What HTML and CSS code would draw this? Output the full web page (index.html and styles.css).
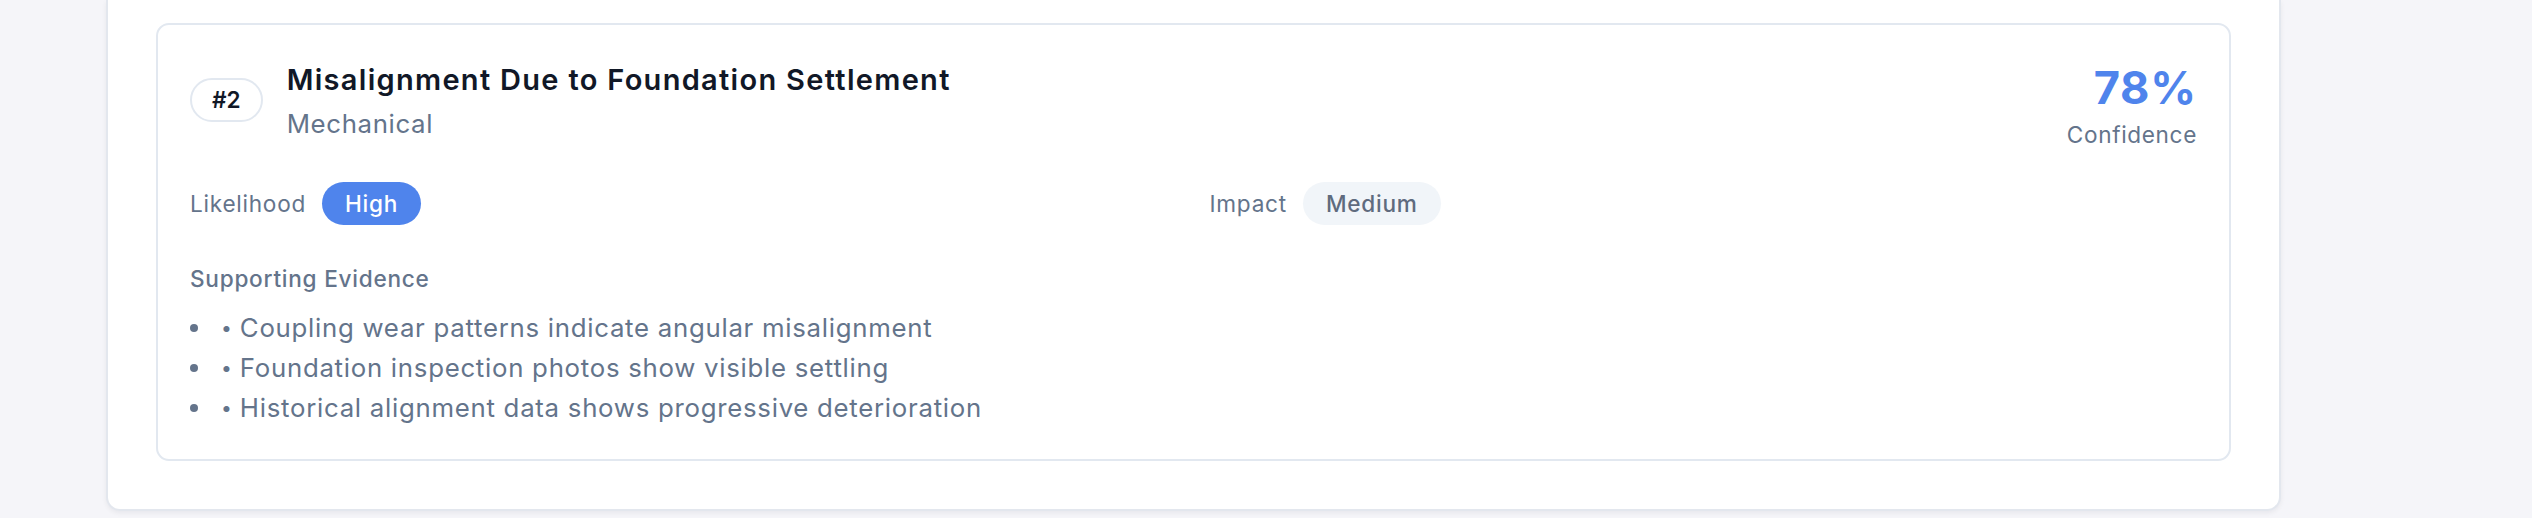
FILE: index.html
```html
<!DOCTYPE html>
<html lang="en">
<head>
<meta charset="utf-8">
<title>Root Cause Analysis</title>
<link rel="stylesheet" href="styles.css">
</head>
<body>
<section class="panel">
  <article class="cause">
    <header class="cause-head">
      <div class="cause-id">
        <span class="rank">#2</span>
        <div class="cause-text">
          <h3 class="cause-title">Misalignment Due to Foundation Settlement</h3>
          <div class="cause-category">Mechanical</div>
        </div>
      </div>
      <div class="confidence">
        <div class="confidence-value">78%</div>
        <div class="confidence-label">Confidence</div>
      </div>
    </header>

    <div class="ratings">
      <div class="rating">
        <span class="rating-label">Likelihood</span>
        <span class="pill pill-high">High</span>
      </div>
      <div class="rating">
        <span class="rating-label">Impact</span>
        <span class="pill pill-medium">Medium</span>
      </div>
    </div>

    <div class="evidence">
      <h4 class="evidence-title">Supporting Evidence</h4>
      <ul class="evidence-list">
        <li><span class="tick">•</span> Coupling wear patterns indicate angular misalignment</li>
        <li><span class="tick">•</span> Foundation inspection photos show visible settling</li>
        <li><span class="tick">•</span> Historical alignment data shows progressive deterioration</li>
      </ul>
    </div>
  </article>
</section>
</body>
</html>
```

FILE: styles.css
```css
* {
  box-sizing: border-box;
}

html, body {
  margin: 0;
  padding: 0;
}

body {
  background: #f5f5f9;
  font-family: Inter, "Noto Sans", "Liberation Sans", sans-serif;
  color: #111827;
  min-height: 518px;
}

.panel {
  margin-left: 106px;
  width: 2175px;
  background: #ffffff;
  border: 2px solid #e3e7ee;
  border-top: 0;
  border-radius: 0 0 14px 14px;
  padding: 23px 48px 48px;
  box-shadow: 0 2px 5px rgba(15, 23, 42, 0.06);
}

.cause {
  border: 2px solid #e2e8f0;
  border-radius: 13px;
  padding: 32px;
  background: #ffffff;
}

.cause-head {
  display: flex;
  justify-content: space-between;
  align-items: flex-start;
}

.cause-id {
  display: flex;
  align-items: center;
  gap: 24px;
}

.rank {
  display: inline-block;
  border: 2px solid #e2e8f0;
  border-radius: 999px;
  padding: 4px 20px;
  font-size: 22.6px;
  line-height: 32px;
  font-weight: 600;
  color: #111827;
}

.cause-title {
  margin: 0;
  font-size: 29px;
  line-height: 45px;
  font-weight: 600;
  letter-spacing: 1.3px;
  color: #111827;
}

.cause-category {
  margin-top: 2px;
  font-size: 25.8px;
  line-height: 39px;
  letter-spacing: 0.65px;
  color: #64748b;
}

.confidence {
  text-align: right;
}

.confidence-value {
  font-size: 45.2px;
  line-height: 62px;
  font-weight: 700;
  letter-spacing: 0.8px;
  color: #4f84ec;
}

.confidence-label {
  font-size: 22.6px;
  line-height: 32px;
  letter-spacing: 0.65px;
  color: #64748b;
}

.ratings {
  display: grid;
  grid-template-columns: 1fr 1fr;
  column-gap: 32px;
  margin-top: 31px;
}

.rating {
  display: flex;
  align-items: center;
  gap: 16px;
}

.rating-label {
  font-size: 22.6px;
  line-height: 32px;
  letter-spacing: 0.75px;
  color: #64748b;
}

.pill {
  display: inline-block;
  border-radius: 999px;
  padding: 5.7px 23px;
  font-size: 22.6px;
  line-height: 32px;
  font-weight: 500;
  letter-spacing: 0.75px;
}

.pill-high {
  background: #4f84ec;
  color: #ffffff;
}

.pill-medium {
  background: #f1f5f9;
  color: #5f6b7e;
}

.evidence {
  margin-top: 38px;
}

.evidence-title {
  margin: 0 0 13px;
  font-size: 22.6px;
  line-height: 32px;
  font-weight: 500;
  letter-spacing: 0.75px;
  color: #64748b;
}

.evidence-list {
  margin: 0;
  padding: 0;
  list-style: none;
  color: #64748b;
  font-size: 25.8px;
  line-height: 39.7px;
  letter-spacing: 0.72px;
}

.evidence-list li::before {
  content: "";
  display: inline-block;
  width: 8px;
  height: 8px;
  border-radius: 50%;
  background: #64748b;
  margin-right: 23px;
  vertical-align: 5px;
  line-height: 0;
}

.tick {
  font-size: 0.75em;
  line-height: 0;
  letter-spacing: 0;
  vertical-align: 2px;
}
```
